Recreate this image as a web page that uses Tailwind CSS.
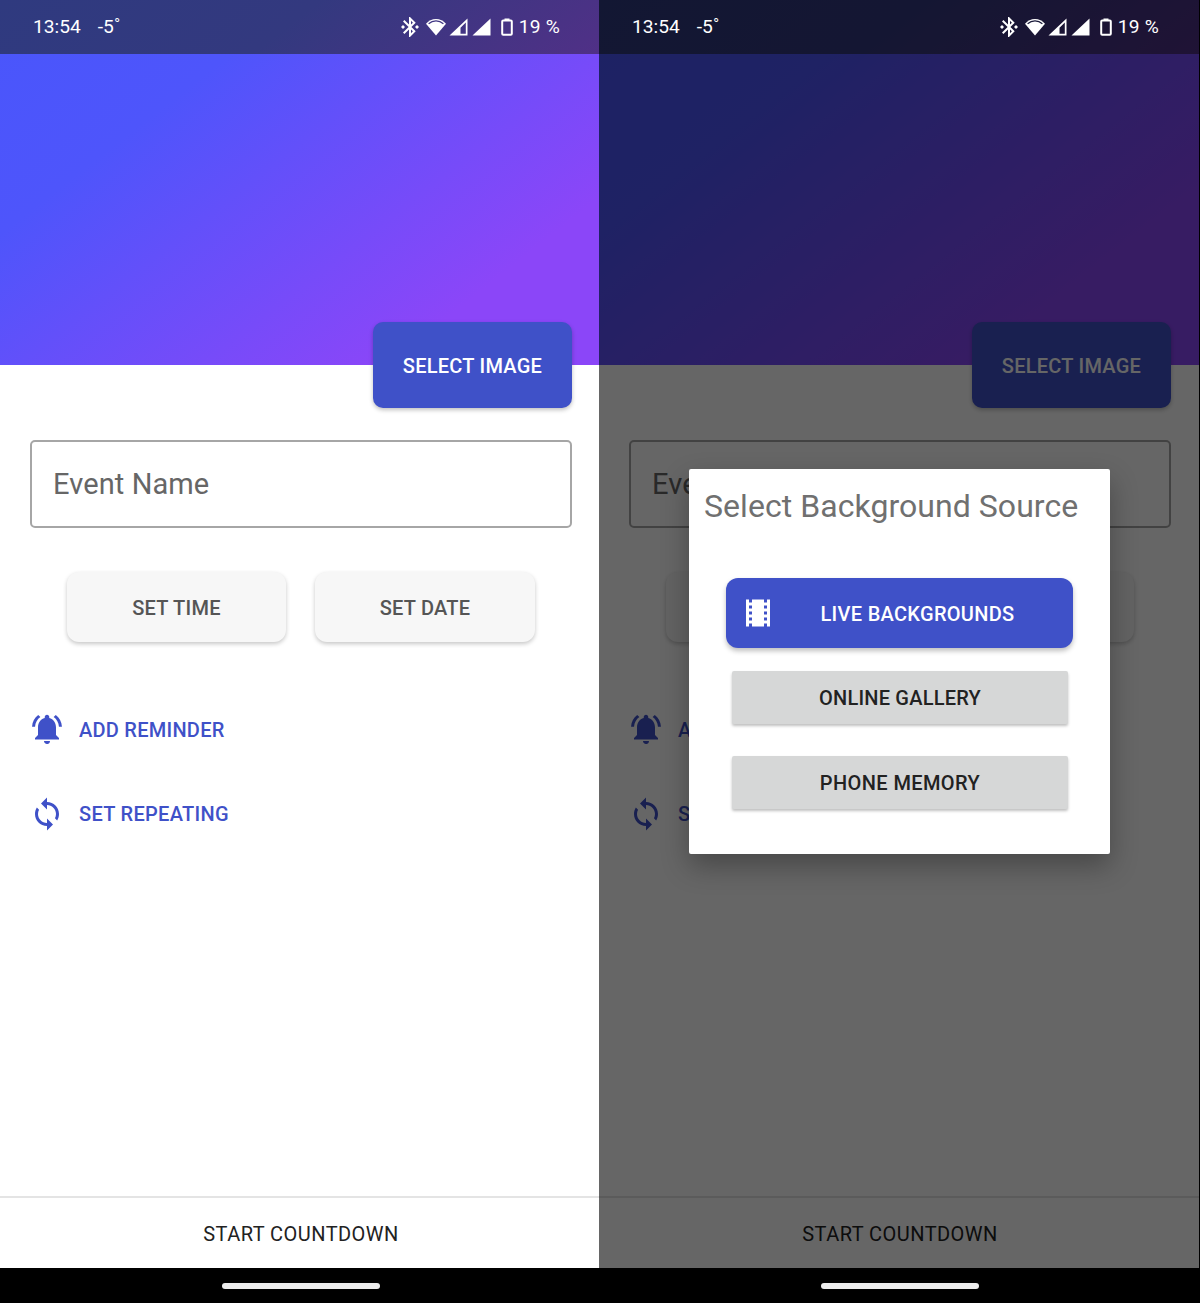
<!DOCTYPE html>
<html lang="en"><head><meta charset="utf-8"><title>Countdown</title>
<script src="https://cdn.jsdelivr.net/npm/@tailwindcss/browser@4"></script></head>
<body class="bg-black">
<div class="flex w-[1200px] h-[1303px] overflow-hidden font-['Roboto',sans-serif]">
<!-- LEFT -->
<section class="relative w-[600px] shrink-0 h-[1303px] flex flex-col bg-white">
  <header class="h-[54px] shrink-0 flex items-center justify-between pl-[33px] pr-[40px] text-white bg-[linear-gradient(142deg,#2f3a7f_0%,#33397f_30%,#642a8c_85%,#642a8c_100%)] bg-[length:100%_365px] bg-top text-[19.2px]">
    <div class="flex gap-[17px]"><span>13:54</span><span>-5˚</span></div>
    <div class="flex items-center">
      <svg class="w-[24px] h-[24px] mr-[3px]" viewBox="0 0 24 24" fill="#fff"><path d="M7 12l-2-2-2 2 2 2 2-2zm10.71-4.29L12 2h-1v7.59L6.41 5 5 6.41 10.59 12 5 17.59 6.41 19 11 14.41V22h1l5.71-5.71-4.3-4.29 4.3-4.29zM13 5.83l1.88 1.88L13 9.59V5.83zm1.88 10.46L13 18.17v-3.76l1.88 1.88zM19 10l-2 2 2 2 2-2-2-2z"/></svg>
      <svg class="w-[22px] h-[20px] mr-[2px]" viewBox="0 0 22 20" fill="#fff"><path d="M11 18.500 1 6.800C3.600 3.900 7.100 2 11 2s7.400 1.900 10 4.800z"/><path d="M3.600 6.800C5.600 5 8.200 3.900 11 3.900s5.400 1.100 7.400 2.900" fill="none" stroke="#3f3583" stroke-width="1.200"/></svg>
      <svg class="w-[19px] h-[18px] mr-[4px]" viewBox="0 0 19 18" fill="#fff"><path fill-rule="evenodd" d="M18.500.5v17H.5zM16.800 4.500 11.500 9.800v6H16.800z"/></svg>
      <svg class="w-[19px] h-[18px] mr-[10px]" viewBox="0 0 19 18" fill="#fff"><path d="M18.500.5v17H.500z"/></svg>
      <svg class="w-[12px] h-[18px] mr-[6px]" viewBox="0 0 12 18"><rect x="1.200" y="2.600" width="9.600" height="14.200" rx="1" fill="none" stroke="#fff" stroke-width="2"/><rect x="3.500" y="0.500" width="5" height="2" fill="#fff"/></svg>
      <span class="tracking-[0.2px]">19 %</span>
    </div>
  </header>
  <div class="h-[311px] shrink-0 bg-[linear-gradient(142deg,#4956fb_0%,#4e55fb_28%,#8b46f8_80%,#8b46f8_100%)] bg-[length:100%_365px] bg-bottom"></div>
  <button class="self-end -mt-[43px] mr-[28px] w-[199px] h-[86px] pt-[2px] rounded-[10px] bg-[#3f51c8] text-white text-[20px] tracking-[0.25px] font-medium shadow-[0_2px_4px_rgba(0,0,0,.25)]">SELECT IMAGE</button>
  <div class="mt-[32px] ml-[30px] mr-[28px] h-[88px] pt-[2px] rounded-[5px] border-2 border-[#a6a6a6] flex items-center pl-[21px] text-[29px] tracking-[0.1px] text-[#666]">Event Name</div>
  <div class="mt-[44px] pl-[2px] flex justify-center gap-[29px]">
    <button class="w-[219px] h-[70px] pt-[2px] rounded-[12px] bg-[#f7f7f7] text-[20px] tracking-[0.25px] font-medium text-[#555] shadow-[0_2px_4px_rgba(0,0,0,.22)]">SET TIME</button>
    <button class="w-[220px] h-[70px] pt-[2px] rounded-[12px] bg-[#f7f7f7] text-[20px] tracking-[0.25px] font-medium text-[#555] shadow-[0_2px_4px_rgba(0,0,0,.22)]">SET DATE</button>
  </div>
  <div class="mt-[68px] ml-[29px] flex items-center h-[40px] gap-[14px] text-[#3f51c8] text-[20px] tracking-[0.25px] font-medium">
    <svg class="w-[36px] h-[36px] -mt-[2px]" viewBox="0 0 24 24" fill="#3f51c8"><path d="M7.58 4.080L6.150 2.650C3.750 4.480 2.170 7.300 2.030 10.500h2c.15-2.650 1.510-4.970 3.550-6.420zm12.390 6.420h2c-.15-3.200-1.730-6.020-4.120-7.850l-1.420 1.430c2.020 1.450 3.390 3.770 3.540 6.420zM18 11c0-3.070-1.640-5.640-4.500-6.320V4c0-.83-.67-1.500-1.500-1.500s-1.500.67-1.500 1.500v.68C7.630 5.360 6 7.920 6 11v5l-2 2v1h16v-1l-2-2v-5zm-6 11c.14 0 .27-.01.4-.04.65-.14 1.180-.58 1.440-1.180.1-.24.15-.5.15-.78h-4c.01 1.100.9 2 2.010 2z"/></svg>
    <span>ADD REMINDER</span>
  </div>
  <div class="mt-[44px] ml-[29px] flex items-center h-[40px] gap-[14px] text-[#3f51c8] text-[20px] tracking-[0.3px] font-medium">
    <svg class="w-[36px] h-[36px]" viewBox="0 0 24 24" fill="#3f51c8"><path d="M12 4V1L8 5l4 4V6c3.310 0 6 2.690 6 6 0 1.010-.25 1.970-.7 2.800l1.460 1.460C19.540 15.030 20 13.570 20 12c0-4.420-3.580-8-8-8zm0 14c-3.310 0-6-2.690-6-6 0-1.010.25-1.970.7-2.800L5.240 7.740C4.460 8.970 4 10.430 4 12c0 4.420 3.580 8 8 8v3l4-4-4-4v3z"/></svg>
    <span>SET REPEATING</span>
  </div>
  <div class="mt-auto h-[72px] pt-[2px] pl-[2px] border-t-2 border-[#e4e4e4] flex items-center justify-center text-[20px] tracking-[0.45px] text-[#222]">START COUNTDOWN</div>
  <div class="h-[35px] shrink-0 bg-black flex items-center justify-center"><div class="w-[158px] h-[6px] ml-[1px] rounded-full bg-[#ececec]"></div></div>
</section>
<!-- RIGHT -->
<section class="relative w-[600px] shrink-0 h-[1303px] -ml-px flex flex-col bg-white">
  <header class="h-[54px] shrink-0 flex items-center justify-between pl-[33px] pr-[40px] text-white bg-[linear-gradient(142deg,#2f3a7f_0%,#33397f_30%,#642a8c_85%,#642a8c_100%)] bg-[length:100%_365px] bg-top text-[19.2px]">
    <div class="flex gap-[17px] relative z-20"><span>13:54</span><span>-5˚</span></div>
    <div class="flex items-center relative z-20">
      <svg class="w-[24px] h-[24px] mr-[3px]" viewBox="0 0 24 24" fill="#fff"><path d="M7 12l-2-2-2 2 2 2 2-2zm10.71-4.29L12 2h-1v7.59L6.41 5 5 6.41 10.59 12 5 17.59 6.41 19 11 14.41V22h1l5.71-5.71-4.3-4.29 4.3-4.29zM13 5.83l1.88 1.88L13 9.59V5.83zm1.88 10.46L13 18.17v-3.76l1.88 1.88zM19 10l-2 2 2 2 2-2-2-2z"/></svg>
      <svg class="w-[22px] h-[20px] mr-[2px]" viewBox="0 0 22 20" fill="#fff"><path d="M11 18.500 1 6.800C3.600 3.900 7.100 2 11 2s7.400 1.900 10 4.800z"/><path d="M3.600 6.800C5.600 5 8.200 3.900 11 3.900s5.400 1.100 7.400 2.900" fill="none" stroke="#1a1a3a" stroke-width="1.200"/></svg>
      <svg class="w-[19px] h-[18px] mr-[4px]" viewBox="0 0 19 18" fill="#fff"><path fill-rule="evenodd" d="M18.500.5v17H.5zM16.800 4.500 11.500 9.800v6H16.800z"/></svg>
      <svg class="w-[19px] h-[18px] mr-[10px]" viewBox="0 0 19 18" fill="#fff"><path d="M18.500.5v17H.500z"/></svg>
      <svg class="w-[12px] h-[18px] mr-[6px]" viewBox="0 0 12 18"><rect x="1.200" y="2.600" width="9.600" height="14.200" rx="1" fill="none" stroke="#fff" stroke-width="2"/><rect x="3.500" y="0.500" width="5" height="2" fill="#fff"/></svg>
      <span class="tracking-[0.2px]">19 %</span>
    </div>
  </header>
  <div class="h-[311px] shrink-0 bg-[linear-gradient(142deg,#4956fb_0%,#4e55fb_28%,#8b46f8_80%,#8b46f8_100%)] bg-[length:100%_365px] bg-bottom"></div>
  <button class="self-end -mt-[43px] mr-[28px] w-[199px] h-[86px] pt-[2px] rounded-[10px] bg-[#3f51c8] text-white text-[20px] tracking-[0.25px] font-medium shadow-[0_2px_4px_rgba(0,0,0,.25)]">SELECT IMAGE</button>
  <div class="mt-[32px] ml-[30px] mr-[28px] h-[88px] pt-[2px] rounded-[5px] border-2 border-[#a6a6a6] flex items-center pl-[21px] text-[29px] tracking-[0.1px] text-[#666]">Event Name</div>
  <div class="mt-[44px] pl-[2px] flex justify-center gap-[29px]">
    <button class="w-[219px] h-[70px] pt-[2px] rounded-[12px] bg-[#f7f7f7] text-[20px] tracking-[0.25px] font-medium text-[#555] shadow-[0_2px_4px_rgba(0,0,0,.22)]">SET TIME</button>
    <button class="w-[220px] h-[70px] pt-[2px] rounded-[12px] bg-[#f7f7f7] text-[20px] tracking-[0.25px] font-medium text-[#555] shadow-[0_2px_4px_rgba(0,0,0,.22)]">SET DATE</button>
  </div>
  <div class="mt-[68px] ml-[29px] flex items-center h-[40px] gap-[14px] text-[#3f51c8] text-[20px] tracking-[0.25px] font-medium">
    <svg class="w-[36px] h-[36px] -mt-[2px]" viewBox="0 0 24 24" fill="#3f51c8"><path d="M7.58 4.080L6.150 2.650C3.750 4.480 2.170 7.300 2.030 10.500h2c.15-2.650 1.510-4.970 3.550-6.420zm12.390 6.420h2c-.15-3.200-1.730-6.020-4.120-7.850l-1.420 1.430c2.020 1.450 3.390 3.770 3.540 6.420zM18 11c0-3.070-1.640-5.640-4.500-6.320V4c0-.83-.67-1.500-1.500-1.500s-1.500.67-1.500 1.500v.68C7.630 5.360 6 7.920 6 11v5l-2 2v1h16v-1l-2-2v-5zm-6 11c.14 0 .27-.01.4-.04.65-.14 1.180-.58 1.440-1.180.1-.24.15-.5.15-.78h-4c.01 1.100.9 2 2.010 2z"/></svg>
    <span>ADD REMINDER</span>
  </div>
  <div class="mt-[44px] ml-[29px] flex items-center h-[40px] gap-[14px] text-[#3f51c8] text-[20px] tracking-[0.3px] font-medium">
    <svg class="w-[36px] h-[36px]" viewBox="0 0 24 24" fill="#3f51c8"><path d="M12 4V1L8 5l4 4V6c3.310 0 6 2.690 6 6 0 1.010-.25 1.970-.7 2.800l1.460 1.460C19.540 15.030 20 13.570 20 12c0-4.420-3.580-8-8-8zm0 14c-3.310 0-6-2.690-6-6 0-1.010.25-1.970.7-2.800L5.240 7.740C4.460 8.970 4 10.430 4 12c0 4.420 3.580 8 8 8v3l4-4-4-4v3z"/></svg>
    <span>SET REPEATING</span>
  </div>
  <div class="mt-auto h-[72px] pt-[2px] pl-[2px] border-t-2 border-[#e4e4e4] flex items-center justify-center text-[20px] tracking-[0.45px] text-[#222]">START COUNTDOWN</div>
  <div class="h-[35px] shrink-0 bg-black flex items-center justify-center relative z-20"><div class="w-[158px] h-[6px] ml-[1px] rounded-full bg-[#ececec]"></div></div>
  <!-- scrim -->
  <div class="absolute inset-x-0 top-0 bottom-[35px] bg-black/60 z-10"></div>
  <!-- dialog -->
  <div class="absolute z-20 left-[90px] top-[469px] w-[421px] h-[385px] bg-white rounded-[2px] shadow-[0_12px_28px_rgba(0,0,0,.3)] flex flex-col">
    <h2 class="mt-[16px] ml-[15px] text-[32px] leading-[42px] tracking-[0.05px] text-[#707070] whitespace-nowrap">Select Background Source</h2>
    <button class="relative mt-[51px] mx-[37px] h-[70px] rounded-[12px] bg-[#3f51c8] text-white text-[20px] tracking-[0.3px] font-medium pl-[36px] pt-[1px] shadow-[0_3px_5px_rgba(0,0,0,.25)]">
      <svg class="absolute left-[14px] top-[17px] w-[36px] h-[36px]" viewBox="0 0 24 24" fill="#fff"><path d="M18 3v2h-2V3H8v2H6V3H4v18h2v-2h2v2h8v-2h2v2h2V3h-2zM8 17H6v-2h2v2zm0-4H6v-2h2v2zm0-4H6V7h2v2zm10 8h-2v-2h2v2zm0-4h-2v-2h2v2zm0-4h-2V7h2v2z"/></svg>
      LIVE BACKGROUNDS</button>
    <button class="mt-[23px] ml-[43px] mr-[42px] h-[53px] rounded-[2px] bg-[#d6d7d7] text-[20px] tracking-[0.2px] font-medium text-[#222] shadow-[0_2px_3px_rgba(0,0,0,.25)]">ONLINE GALLERY</button>
    <button class="mt-[32px] ml-[43px] mr-[42px] h-[53px] rounded-[2px] bg-[#d6d7d7] text-[20px] tracking-[0.4px] font-medium text-[#222] shadow-[0_2px_3px_rgba(0,0,0,.25)]">PHONE MEMORY</button>
  </div>
</section>
</div>
</body></html>
